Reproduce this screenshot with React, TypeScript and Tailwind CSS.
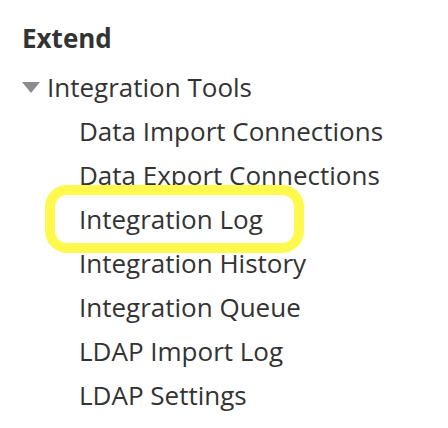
import React from 'react';

const children = [
  'Data Import Connections',
  'Data Export Connections',
  'Integration Log',
  'Integration History',
  'Integration Queue',
  'LDAP Import Log',
  'LDAP Settings',
];

const App = () => {
  return (
    <div
      className="w-[448px] h-[428px] bg-white pl-[22px] pt-[16px] text-[#333333] overflow-hidden"
      style={{ fontFamily: '"Open Sans", "Liberation Sans", sans-serif' }}
    >
      <h2 className="text-[26px] leading-[44px] font-bold mb-[5px]">Extend</h2>
      <div className="flex items-center h-[44px]">
        <svg width="18" height="12" viewBox="0 0 18 12" className="mr-[7px] mt-[1px] shrink-0">
          <polygon points="0,0 18,0 9,11" fill="#8c8c8c" />
        </svg>
        <span className="text-[26px] leading-[44px]">Integration Tools</span>
      </div>
      <ul className="pl-[57px]">
        {children.map((label) => (
          <li key={label} className="relative text-[26px] leading-[44px] whitespace-nowrap">
            {label === 'Integration Log' && (
              <div className="absolute left-[-34px] top-[-12px] w-[259px] h-[68px] border-[10px] border-[#fff84d] rounded-[22px]" />
            )}
            <span className="relative">{label}</span>
          </li>
        ))}
      </ul>
    </div>
  );
};

export default App;
